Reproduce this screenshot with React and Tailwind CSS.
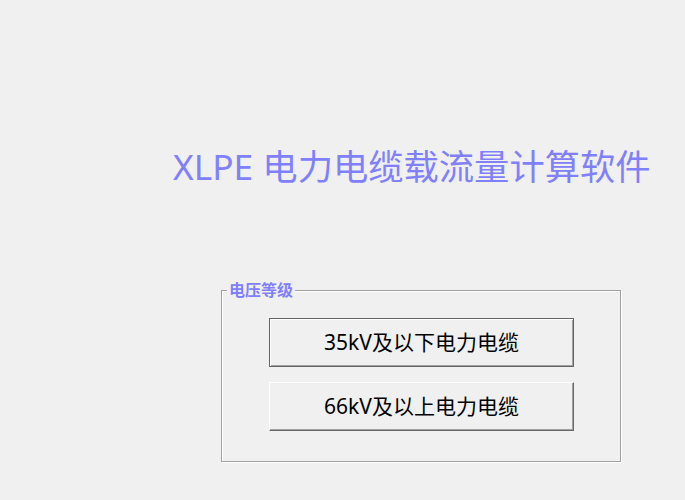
export default function App() {
  const font = { fontFamily: '"Noto Sans", "Noto Sans CJK SC", sans-serif' };
  return (
    <div className="w-[685px] h-[500px] bg-[#f0f0f0] overflow-hidden" style={font}>
      <div className="pt-[143px] pl-[173px] text-[35.3px] leading-[46px] text-[#8080ff] whitespace-nowrap">
        XLPE 电力电缆载流量计算软件
      </div>
      <div className="relative mt-[101px] ml-[221px] w-[400px] h-[172px] border border-[#a0a0a0] shadow-[inset_1px_1px_0_#ffffff,1px_1px_0_#ffffff]">
        <div className="absolute left-[5px] top-[-11px] px-[2px] bg-[#f0f0f0] text-[16px] leading-[20px] font-bold text-[#8080ff]">
          电压等级
        </div>
        <div className="flex flex-col gap-[15px] pt-[27px] pl-[47px]">
          <button className="w-[305px] h-[49px] bg-[#f0f0f0] border border-[#646464] shadow-[inset_1px_1px_0_#ffffff,inset_-1px_-1px_0_#a0a0a0] text-[21px] text-black flex items-center justify-center">
            35kV及以下电力电缆
          </button>
          <button className="w-[305px] h-[49px] bg-[#f0f0f0] border-t border-l border-t-white border-l-white border-b border-r border-b-[#696969] border-r-[#696969] shadow-[inset_-1px_-1px_0_#a0a0a0] text-[21px] text-black flex items-center justify-center">
            66kV及以上电力电缆
          </button>
        </div>
      </div>
    </div>
  );
}
